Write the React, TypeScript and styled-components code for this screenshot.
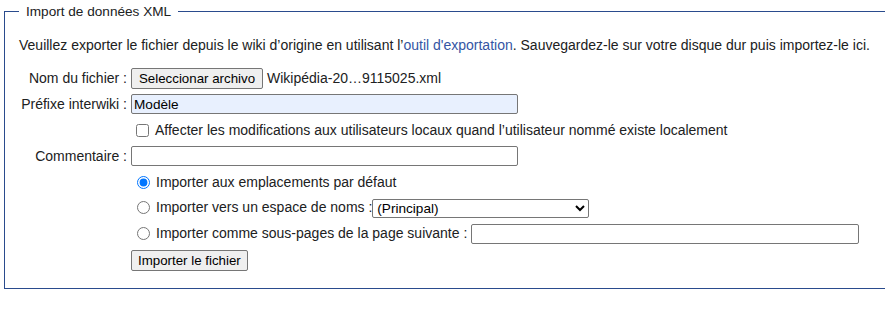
import React from "react";
import styled, { createGlobalStyle } from "styled-components";

const GlobalStyle = createGlobalStyle`
  html, body {
    margin: 0;
    padding: 0;
    background: #fff;
    overflow: hidden;
  }
  body {
    font-family: "Liberation Sans", Arial, sans-serif;
    font-size: 14px;
    color: #202122;
  }
`;

const Page = styled.div`
  padding: 4px 0 0 4px;
  width: 910px;
`;

const Fieldset = styled.fieldset`
  margin: 0;
  border: 1px solid #2a4b8d;
  padding: 10px 14px 15px 14px;
`;

const Legend = styled.legend`
  padding: 0 7px;
  margin-left: 0;
  font-size: 13.6px;
  color: #202122;
`;

const Intro = styled.p`
  margin: 8px 0 12px;
  font-size: 14px;
`;

const ExtLink = styled.a`
  color: #3455a4;
  text-decoration: none;
`;

const FormTable = styled.table`
  border-collapse: separate;
  border-spacing: 0;
  font-size: 14px;
`;

const Row = styled.tr``;

const LabelCell = styled.td`
  text-align: right;
  padding: 0 4px 0 0;
  height: 26px;
  white-space: nowrap;
  width: 108px;
`;

const FieldCell = styled.td`
  padding: 0;
  height: 26px;
  white-space: nowrap;
`;

const FileButton = styled.button`
  font-family: "Liberation Sans", Arial, sans-serif;
  font-size: 13.3px;
  height: 21px;
  padding: 0 7px;
  margin-right: 4px;
  background: #efefef;
  border: 1px solid #767676;
  border-radius: 2px;
  color: #000;
`;

const TextInput = styled.input<{ $w: number; $filled?: boolean }>`
  font-family: "Liberation Sans", Arial, sans-serif;
  font-size: 13.6px;
  width: ${(p) => p.$w}px;
  height: 20px;
  box-sizing: border-box;
  padding: 1px 2px;
  border: 1px solid #767676;
  border-radius: 2px;
  background: ${(p) => (p.$filled ? "#e8f0fe" : "#fff")};
  color: #000;
  vertical-align: middle;
`;

const Check = styled.input`
  margin: 3px 6px 3px 5px;
  vertical-align: -2px;
`;

const Radio = styled.input`
  margin: 3px 6px 3px 6px;
  vertical-align: -2px;
`;

const NsSelect = styled.select`
  font-family: "Liberation Sans", Arial, sans-serif;
  font-size: 13.6px;
  width: 217px;
  height: 19px;
  margin-left: 0;
  border: 1px solid #767676;
  border-radius: 2px;
  color: #000;
  background: #fff;
  vertical-align: middle;
`;

const SubmitButton = styled.button`
  font-family: "Liberation Sans", Arial, sans-serif;
  font-size: 13.3px;
  height: 21px;
  padding: 0 6px;
  background: #efefef;
  border: 1px solid #767676;
  border-radius: 2px;
  color: #000;
`;

export default function App() {
  return (
    <>
      <GlobalStyle />
      <Page>
        <Fieldset>
          <Legend>Import de données XML</Legend>
          <Intro>
            Veuillez exporter le fichier depuis le wiki d’origine en utilisant l’
            <ExtLink href="#">outil d'exportation</ExtLink>. Sauvegardez-le sur votre disque dur
            puis importez-le ici.
          </Intro>
          <FormTable>
            <tbody>
              <Row>
                <LabelCell>Nom du fichier :</LabelCell>
                <FieldCell>
                  <FileButton type="button">Seleccionar archivo</FileButton>
                  Wikipédia-20…9115025.xml
                </FieldCell>
              </Row>
              <Row>
                <LabelCell>Préfixe interwiki :</LabelCell>
                <FieldCell>
                  <TextInput $w={387} $filled defaultValue="Modèle" />
                </FieldCell>
              </Row>
              <Row>
                <LabelCell />
                <FieldCell>
                  <Check type="checkbox" />
                  Affecter les modifications aux utilisateurs locaux quand l’utilisateur nommé existe
                  localement
                </FieldCell>
              </Row>
              <Row>
                <LabelCell>Commentaire :</LabelCell>
                <FieldCell>
                  <TextInput $w={387} />
                </FieldCell>
              </Row>
              <Row>
                <LabelCell />
                <FieldCell>
                  <Radio type="radio" name="mode" defaultChecked />
                  Importer aux emplacements par défaut
                </FieldCell>
              </Row>
              <Row>
                <LabelCell />
                <FieldCell>
                  <Radio type="radio" name="mode" />
                  Importer vers un espace de noms :
                  <NsSelect defaultValue="0">
                    <option value="0">(Principal)</option>
                  </NsSelect>
                </FieldCell>
              </Row>
              <Row>
                <LabelCell />
                <FieldCell>
                  <Radio type="radio" name="mode" />
                  Importer comme sous-pages de la page suivante :{" "}
                  <TextInput $w={388} />
                </FieldCell>
              </Row>
              <Row>
                <LabelCell />
                <FieldCell>
                  <SubmitButton type="button">Importer le fichier</SubmitButton>
                </FieldCell>
              </Row>
            </tbody>
          </FormTable>
        </Fieldset>
      </Page>
    </>
  );
}
